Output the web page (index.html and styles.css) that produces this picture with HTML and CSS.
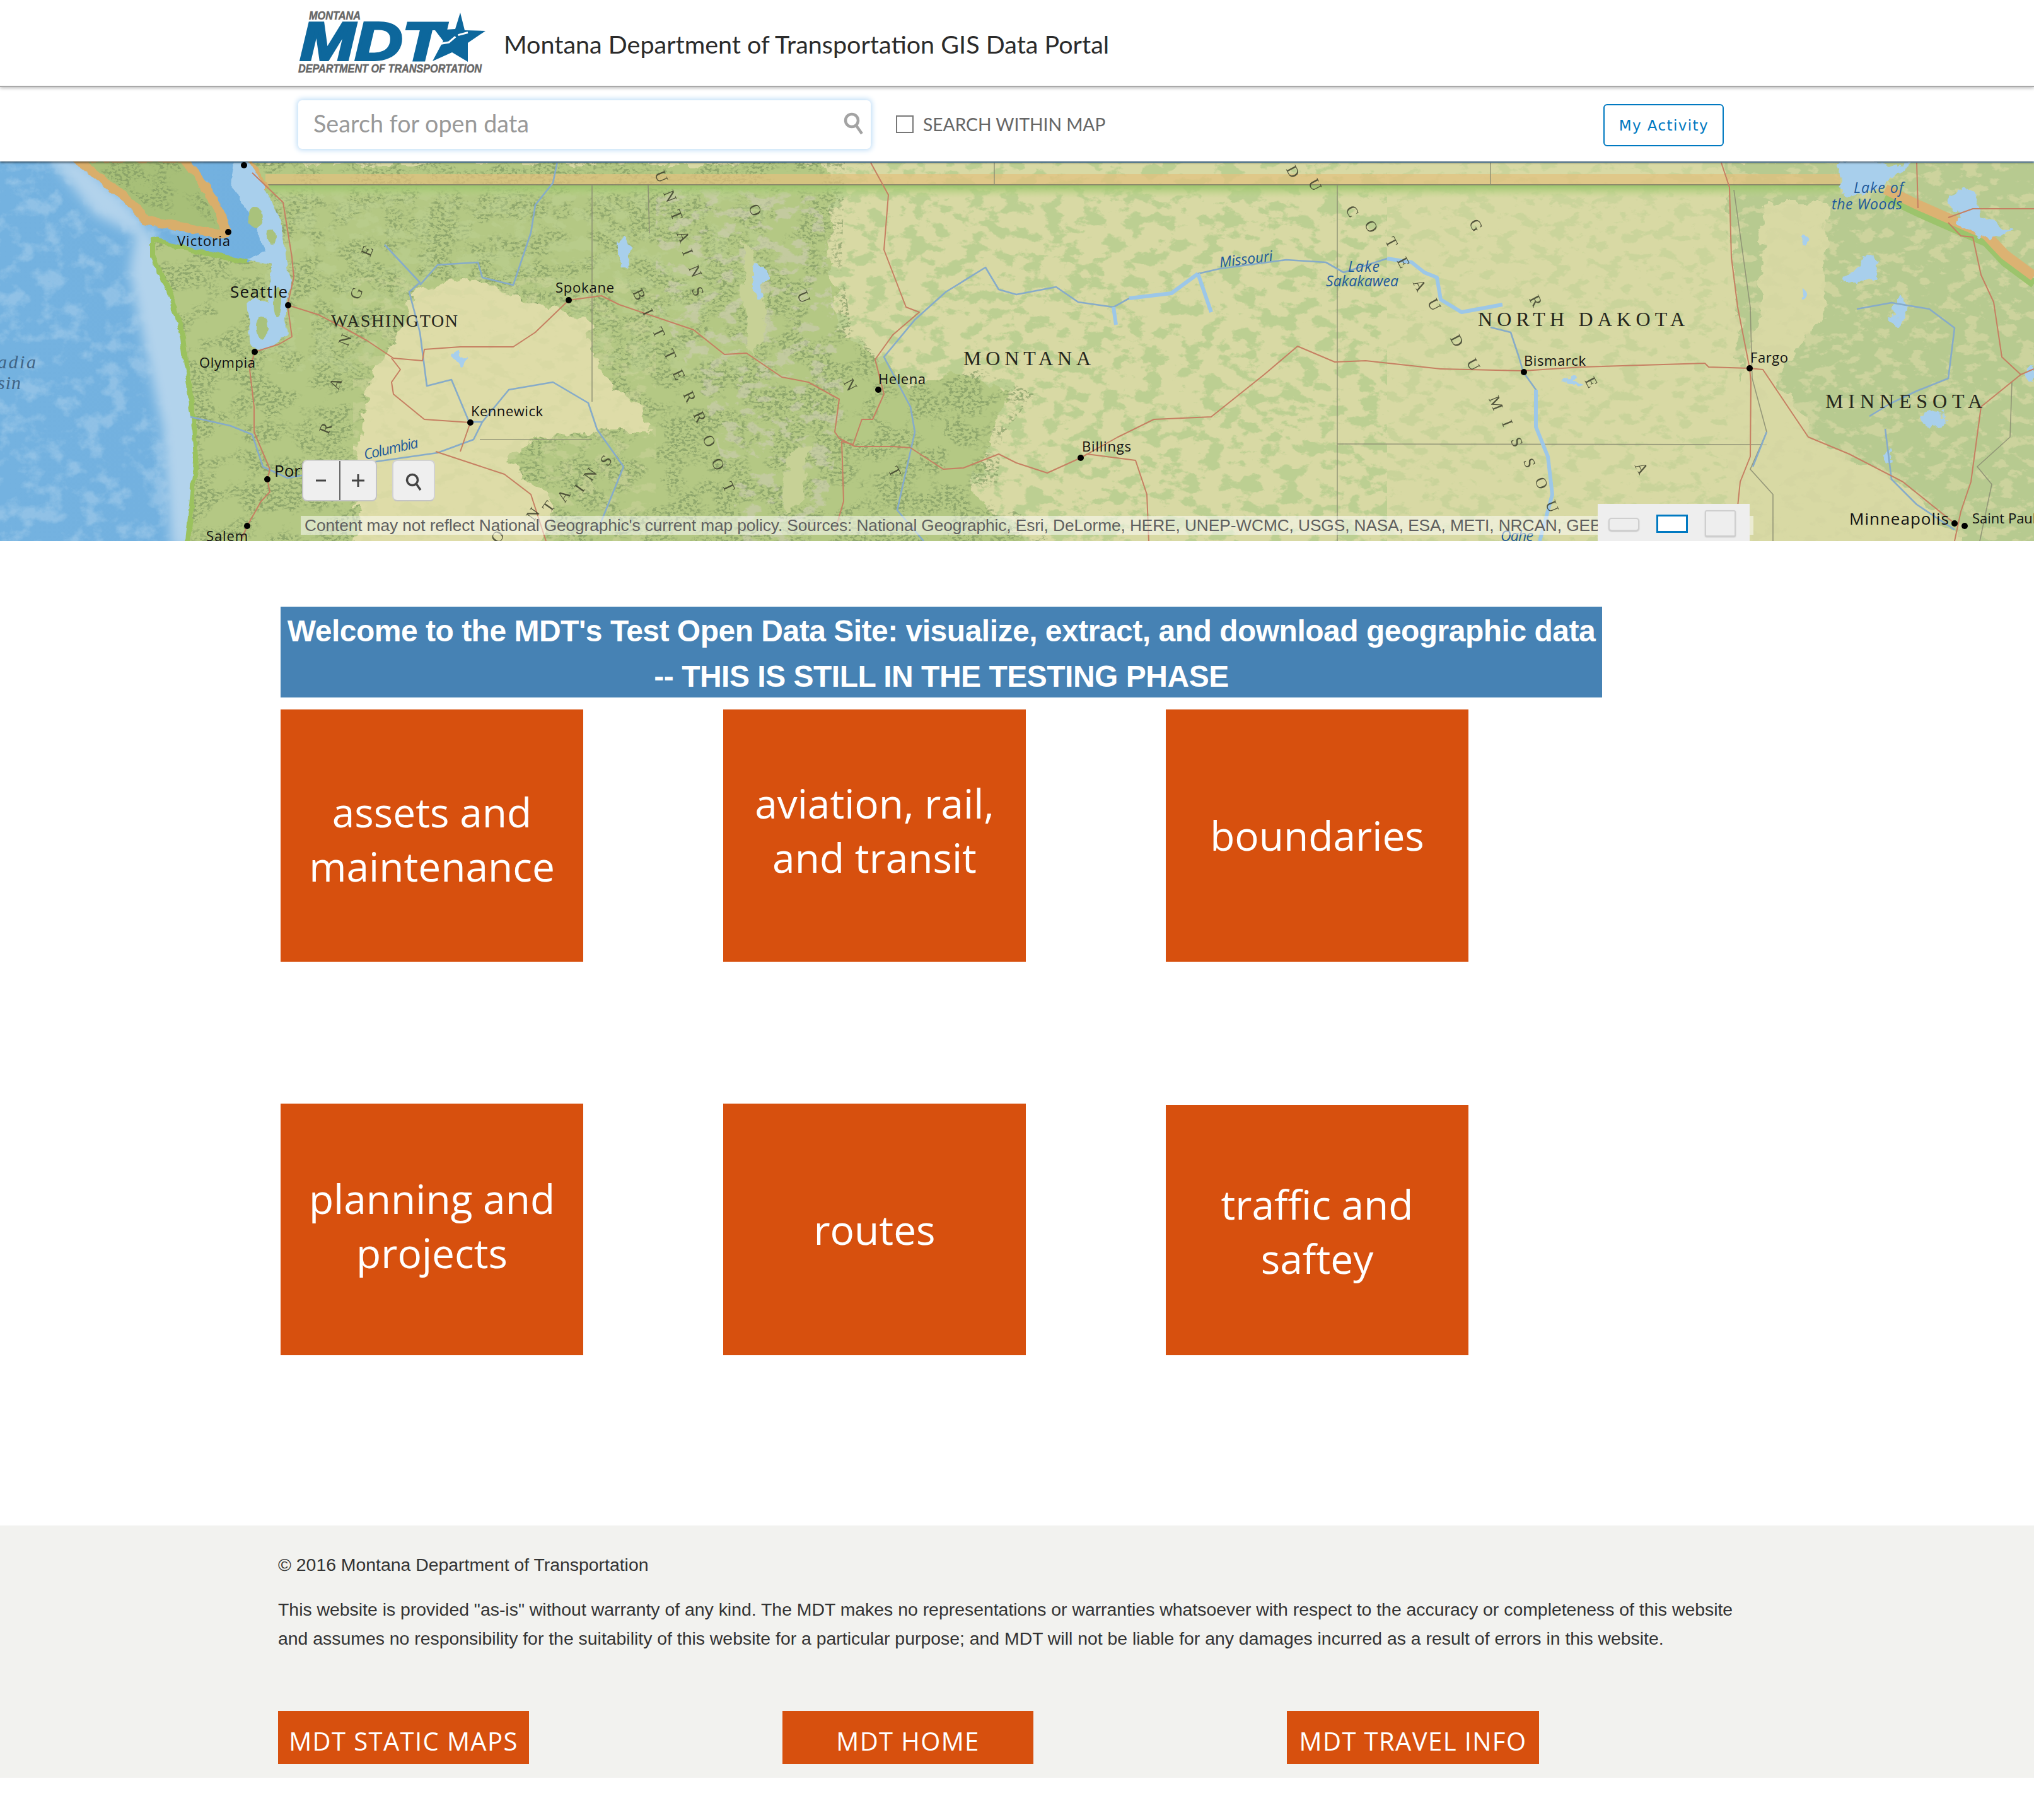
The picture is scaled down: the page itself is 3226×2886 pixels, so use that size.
FILE: index.html
```html
<!DOCTYPE html>
<html lang="en">
<head>
<meta charset="utf-8">
<title>Montana Department of Transportation GIS Data Portal</title>
<link rel="stylesheet" href="styles.css">
</head>
<body>
<header class="topbar">
  <svg class="logo" viewBox="470 14 302 104" width="302" height="104" role="img" aria-label="MDT logo">
    <text class="logo-sm" x="490" y="31" textLength="82" lengthAdjust="spacingAndGlyphs">MONTANA</text>
    <text class="logo-big" x="476" y="95" textLength="226" lengthAdjust="spacingAndGlyphs">MDT</text>
    <polygon class="logo-star" points="730,20 737,48 770,49 742,68 742,98 717,83 686,97 703,65 690,48 722,46"/>
    <path class="logo-swoosh" d="M690,71 L712,67 L725,56 L748,50"/>
    <text class="logo-sm" x="473" y="115" textLength="291" lengthAdjust="spacingAndGlyphs">DEPARTMENT OF TRANSPORTATION</text>
  </svg>
  <h1 class="site-title">Montana Department of Transportation GIS Data Portal</h1>
</header>

<div class="searchbar">
  <div class="search-box">
    <span class="search-placeholder">Search for open data</span>
    <svg class="search-icon" viewBox="0 0 32 36" width="32" height="36"><circle cx="13" cy="13" r="10"/><path d="M20 21 L29 34"/></svg>
  </div>
  <label class="within">
    <span class="within-box"></span>
    <span class="within-text">SEARCH WITHIN MAP</span>
  </label>
  <button class="activity">My Activity</button>
</div>

<section class="map">
  <svg class="map-art" viewBox="0 256 3226 602" width="3226" height="602" preserveAspectRatio="none">
    <defs>
      <linearGradient id="sea" x1="0" x2="1" y1="0" y2="0">
        <stop offset="0" stop-color="#74b2e0"/>
        <stop offset=".6" stop-color="#6dabdc"/>
        <stop offset="1" stop-color="#8fc0e6"/>
      </linearGradient>
      <linearGradient id="bandfade" x1="0" x2="0" y1="0" y2="1">
        <stop offset="0" stop-color="#9cc46c"/>
        <stop offset="1" stop-color="#b8d486" stop-opacity="0"/>
      </linearGradient>
      <filter id="ridge" x="0" y="0" width="1" height="1" color-interpolation-filters="sRGB">
        <feTurbulence type="fractalNoise" baseFrequency=".03 .035" numOctaves="5" seed="8"/>
        <feColorMatrix type="matrix" values="0 0 0 0 1  0 0 0 0 1  0 0 0 0 1  4 0 0 0 -1.9"/>
        <feComposite in2="SourceGraphic" operator="in"/>
      </filter>
      <filter id="blotch" x="0" y="0" width="1" height="1" color-interpolation-filters="sRGB">
        <feTurbulence type="fractalNoise" baseFrequency=".032 .05" numOctaves="6" seed="3" result="n"/>
        <feColorMatrix in="n" type="matrix" values="0 0 0 0 0  0 0 0 0 0  0 0 0 0 0  11 0 0 0 -5.6" result="a"/>
        <feComposite in="SourceGraphic" in2="a" operator="in"/>
      </filter>
      <filter id="blotch2" x="0" y="0" width="1" height="1" color-interpolation-filters="sRGB">
        <feTurbulence type="fractalNoise" baseFrequency=".035 .055" numOctaves="6" seed="21" result="n"/>
        <feColorMatrix in="n" type="matrix" values="0 0 0 0 0  0 0 0 0 0  0 0 0 0 0  11 0 0 0 -5.9" result="a"/>
        <feComposite in="SourceGraphic" in2="a" operator="in"/>
      </filter>
      <filter id="forest" x="0" y="0" width="1" height="1" color-interpolation-filters="sRGB">
        <feTurbulence type="fractalNoise" baseFrequency=".17 .25" numOctaves="3" seed="5" result="n"/>
        <feColorMatrix in="n" type="matrix" values="0 0 0 0 0  0 0 0 0 0  0 0 0 0 0  8 0 0 0 -3.9" result="fine"/>
        <feTurbulence type="fractalNoise" baseFrequency=".018 .026" numOctaves="5" seed="14" result="c"/>
        <feColorMatrix in="c" type="matrix" values="0 0 0 0 0  0 0 0 0 0  0 0 0 0 0  7 0 0 0 -2.9" result="coarse"/>
        <feComposite in="SourceGraphic" in2="fine" operator="in" result="f1"/>
        <feComposite in="f1" in2="coarse" operator="in"/>
      </filter>
      <filter id="rough" x="-5%" y="-5%" width="110%" height="110%" color-interpolation-filters="sRGB">
        <feTurbulence type="fractalNoise" baseFrequency=".04" numOctaves="4" seed="11" result="n"/>
        <feDisplacementMap in="SourceGraphic" in2="n" scale="30" xChannelSelector="R" yChannelSelector="G"/>
      </filter>
      <filter id="coastal" x="-5%" y="-5%" width="110%" height="110%" color-interpolation-filters="sRGB">
        <feTurbulence type="fractalNoise" baseFrequency=".05" numOctaves="3" seed="4" result="n"/>
        <feDisplacementMap in="SourceGraphic" in2="n" scale="10" xChannelSelector="R" yChannelSelector="G"/>
      </filter>
      <filter id="soft" x="-10%" y="-10%" width="120%" height="120%"><feGaussianBlur stdDeviation="9"/></filter>
      <clipPath id="landclip"><path d="M393,258 L3226,258 L3226,858 L298,858 L312,724 L309,677 L298,598 L291,535 L267,459 L242,408 L242,380 L300,395 L393,416 L421,400 L421,301 Z"/></clipPath>
    </defs>

    <rect class="sea" x="0" y="256" width="3226" height="602"/>
    <rect class="sea-relief" filter="url(#ridge)" x="0" y="256" width="330" height="602"/>
    <path class="shelf" filter="url(#soft)" d="M70,240 L130,258 L205,325 L250,385 L320,500 L330,870 L272,870 L258,680 L232,560 L205,430 L215,372 L150,340 Z"/>

    <!-- land -->
    <path class="land" d="M393,258 L3226,258 L3226,858 L298,858 L312,724 L309,677 L298,598 L291,535 L267,459 L242,408 L242,380 L300,395 L393,416 L421,400 L421,301 Z"/>
    <g clip-path="url(#landclip)">
      <rect class="prairie-green" filter="url(#blotch)" x="1300" y="256" width="900" height="602"/>
      <rect class="prairie-green faint" filter="url(#blotch2)" x="2200" y="256" width="540" height="602"/>
      <path class="east-green" filter="url(#rough)" d="M2740,250 L3240,250 L3240,870 L3130,870 L3010,760 L2880,700 L2820,600 L2890,500 L2900,320 L2800,320 L2790,500 L2760,600 Z"/>
      <rect class="prairie-tan" filter="url(#blotch2)" x="2740" y="256" width="486" height="602"/>
      <path class="west-green" filter="url(#rough)" d="M230,258 L1320,258 L1315,420 L1330,520 L1390,570 L1450,610 L1530,590 L1600,625 L1570,700 L1540,780 L1640,870 L230,870 Z"/>
      <path class="forest" filter="url(#forest)" d="M230,258 L1340,258 L1335,420 L1350,520 L1400,575 L1460,610 L1560,585 L1640,625 L1590,690 L1580,780 L1680,870 L230,870 Z"/>
      <rect class="prairie-green faint" filter="url(#blotch)" x="420" y="293" width="800" height="300"/>
      <path class="basin" filter="url(#rough)" d="M652,463 L744,440 L863,487 L933,507 L947,566 L968,614 L1017,645 L1031,685 L961,685 L842,697 L793,744 L701,803 L561,803 L582,606 L617,558 L652,487 Z"/>
      <path class="basin" filter="url(#rough)" d="M600,740 L800,730 L880,790 L860,870 L560,870 Z"/>
      <rect class="basin-mottle" filter="url(#blotch2)" x="560" y="440" width="480" height="420"/>
      <path class="rock" filter="url(#blotch2)" d="M1040,300 L1300,300 L1340,640 L1300,860 L1180,860 L1120,640 L1040,480 Z"/>
      <path class="foothill" filter="url(#rough)" d="M1180,380 L1205,420 L1215,500 L1195,560 L1175,470 Z"/>
      <path class="foothill" filter="url(#rough)" d="M1250,720 L1285,700 L1270,790 L1240,820 Z"/>
      <!-- border band -->
      <rect class="band-tan" x="421" y="276" width="2498" height="17"/>
      <rect class="band-dark" x="421" y="292" width="2498" height="2"/>
      <rect class="band-green" x="421" y="294" width="2498" height="20"/>
      <path class="border-east-green" d="M2990,312 L3040,336 L3090,358 L3150,384 L3180,416 L3226,450"/>
      <path class="border-east" d="M2990,300 L3040,324 L3090,346 L3150,372 L3180,404 L3226,438"/>
    </g>

    <!-- Vancouver Island -->
    <g filter="url(#coastal)">
      <path class="vi" d="M119,250 L288,250 L309,274 L340,320 L351,337 L358,368 L344,372 L300,362 L231,349 L203,317 Z"/>
      <path class="mainland-edge" d="M393,258 L410,285 L421,301"/>
      <path class="coast" d="M298,858 L312,724 L309,677 L298,598 L291,535 L267,459 L242,408 L242,380 L300,395 L393,416"/>
    </g>
    <path class="forest" filter="url(#forest)" d="M135,258 L280,258 L330,325 L342,356 L300,345 L240,335 L215,310 Z"/>

    <!-- water -->
    <g filter="url(#coastal)">
      <path class="water" d="M370,258 L396,258 L423,305 L446,350 L458,430 L462,445 L452,505 L456,530 L420,556 L398,548 L392,480 L405,470 L426,480 L430,420 L393,412 L421,398 L395,340 L365,290 Z"/>
      <ellipse class="isle" cx="405" cy="345" rx="11" ry="16"/>
      <ellipse class="isle" cx="430" cy="375" rx="8" ry="12"/>
      <ellipse class="isle" cx="440" cy="480" rx="6" ry="24"/>
      <ellipse class="isle" cx="415" cy="520" rx="10" ry="18"/>
    </g>
    <g filter="url(#rough)">
      <ellipse class="water" cx="1200" cy="445" rx="11" ry="28"/>
      <ellipse class="water" cx="990" cy="400" rx="9" ry="26"/>
      <ellipse class="water" cx="730" cy="565" rx="7" ry="12"/>
      <path class="water" d="M2917,258 L3031,258 L3000,285 L2960,310 L2920,305 Z"/>
      <path class="water" d="M3085,310 L3130,300 L3150,345 L3190,365 L3160,380 L3110,355 Z"/>
      <path class="water" d="M2920,440 L2945,425 L2960,404 L2985,410 L2970,440 L2965,448 L2925,448 Z"/>
      <ellipse class="water" cx="3066" cy="667" rx="14" ry="16"/>
      <path class="water" d="M3208,590 L3226,578 L3226,606 Z"/>
      <ellipse class="water" cx="2995" cy="725" rx="4" ry="10"/>
      <ellipse class="water" cx="3010" cy="490" rx="10" ry="20"/>
      <ellipse class="water" cx="2862" cy="462" rx="5" ry="8"/>
      <ellipse class="water" cx="2862" cy="385" rx="5" ry="8"/>
      <ellipse class="water" cx="2495" cy="603" rx="14" ry="4"/>
    </g>

    <!-- state and province lines -->
    <g class="line-state">
      <path d="M939,293 L939,637"/>
      <path d="M761,697 L939,697"/>
      <path d="M1028,293 L1030,370"/>
      <path d="M1577,258 L1577,293"/>
      <path d="M2364,258 L2364,293"/>
      <path d="M2121,293 L2121,858"/>
      <path d="M2121,704 L2802,705"/>
      <path d="M2750,301 L2776,487 L2779,600 L2802,685 L2776,744 L2812,784 L2812,858"/>
      <path d="M3191,606 L3188,693 L3136,740 L3159,768 L3140,858"/>
    </g>

    <!-- rivers -->
    <g class="river">
      <path d="M302,661 L365,675 L400,689 L417,740 L456,758 L596,732 L694,718 L751,697 L765,669 L744,669 L716,602 L677,612 L666,527 L649,463 L666,448 L610,388"/>
      <path d="M666,452 L694,420 L758,416 L765,440 L814,452 L842,369 L849,325 L877,290 L884,256"/>
      <path d="M765,669 L807,618 L877,606 L933,639 L947,681 L989,740 L947,843"/>
      <path d="M1465,858 L1423,809 L1451,685 L1444,645 L1402,566 L1451,507 L1500,463 L1563,424 L1584,459 L1612,467 L1675,455 L1710,479 L1766,487 L1791,473 L1858,465 L1900,434 L1935,426 L2040,412 L2103,416 L2131,432 L2200,410"/>
      <path d="M2364,519 L2396,527 L2409,566 L2416,590 L2436,618 L2436,677 L2455,724 L2462,784 L2442,858"/>
      <path d="M2965,660 L2998,640 L3040,620 L3090,600 L3100,520 L3060,490 L3000,480 L2945,490"/>
      <path d="M2990,680 L3000,760 L3040,800 L3100,840"/>
      <path d="M2802,685 L2780,740"/>
    </g>
    <g class="river-wide">
      <path d="M1791,473 L1858,465 L1900,434"/>
      <path d="M1900,434 L1921,495"/>
      <path d="M1766,487 L1770,515"/>
      <path d="M2200,410 L2239,416 L2259,432 L2279,440 L2285,475 L2318,495 L2383,483"/>
      <path d="M2436,618 L2436,677 L2455,724 L2462,784 L2442,858"/>
    </g>

    <!-- roads -->
    <g class="road">
      <path d="M400,274 L449,321 L463,408 L466,440 L456,483 L463,534 L442,546 L404,558 L396,586 L403,645 L403,685 L428,744 L424,760 L428,780 L414,795 L392,834 L382,858"/>
      <path d="M457,484 L505,499 L544,519 L582,540 L624,568 L670,572 L673,554 L730,550 L814,550 L849,527 L902,476 L954,469 L982,483 L1100,523 L1149,562 L1184,560 L1240,598 L1282,606 L1331,633 L1324,685 L1331,695 L1356,708 L1416,708 L1444,710 L1496,744 L1528,742 L1584,720 L1612,734 L1661,750 L1714,726 L1724,720 L1801,730 L1819,784 L1822,858"/>
      <path d="M1714,726 L1773,693 L1830,665 L1921,661 L2005,594 L2058,549 L2117,574 L2166,572 L2285,585 L2416,588 L2508,582 L2704,576 L2710,582 L2775,584 L2796,586 L2841,653 L2868,693 L2933,720 L3018,764 L3100,830"/>
      <path d="M2730,258 L2743,297 L2746,408 L2756,487 L2775,584 L2777,606 L2776,724 L2760,764 L2756,803"/>
      <path d="M3090,353 L3110,374 L3129,376 L3142,436 L3162,479 L3175,566 L3205,594 L3142,645 L3126,764 L3110,811 L3100,858"/>
      <path d="M3090,345 L3129,331 L3226,331"/>
      <path d="M3205,594 L3226,585"/>
      <path d="M3040,258 L3042,330"/>
      <path d="M1381,258 L1409,309 L1402,396 L1437,487 L1458,495 L1416,531 L1388,570 L1402,625 L1384,665 L1367,665 L1353,705 L1335,700 L1338,795 L1324,843"/>
      <path d="M691,716 L800,752 L842,784 L866,858"/>
      <path d="M621,568 L635,586 L621,606 L624,625 L673,665 L746,670 L730,716"/>
    </g>

    <!-- relief lettering -->
    <g class="relief">
      <text transform="translate(516 679) rotate(-68)">R</text><text transform="translate(532 608) rotate(-68)">A</text><text transform="translate(547 539) rotate(-68)">N</text><text transform="translate(565 465) rotate(-68)">G</text><text transform="translate(582 398) rotate(-68)">E</text>
      <text transform="translate(1049 280) rotate(68)">U</text><text transform="translate(1063 311) rotate(68)">N</text><text transform="translate(1073 341) rotate(68)">T</text><text transform="translate(1084 375) rotate(68)">A</text><text transform="translate(1091 400) rotate(68)">I</text><text transform="translate(1103 430) rotate(68)">N</text><text transform="translate(1107 462) rotate(68)">S</text>
      <text transform="translate(1014 467) rotate(65)">B</text><text transform="translate(1028 495) rotate(65)">I</text><text transform="translate(1045 527) rotate(65)">T</text><text transform="translate(1063 562) rotate(65)">T</text><text transform="translate(1077 594) rotate(65)">E</text><text transform="translate(1094 629) rotate(65)">R</text><text transform="translate(1110 661) rotate(65)">R</text><text transform="translate(1125 699) rotate(65)">O</text><text transform="translate(1139 736) rotate(65)">O</text><text transform="translate(1156 772) rotate(65)">T</text>
      <text transform="translate(961 730) rotate(-55)">S</text><text transform="translate(936 752) rotate(-55)">N</text><text transform="translate(919 774) rotate(-55)">I</text><text transform="translate(894 786) rotate(-55)">A</text><text transform="translate(870 803) rotate(-55)">T</text><text transform="translate(845 815) rotate(-55)">N</text><text transform="translate(789 851) rotate(-55)">O</text>
      <text transform="translate(1198 333) rotate(68)">O</text><text transform="translate(1275 471) rotate(68)">U</text><text transform="translate(1349 610) rotate(62)">N</text><text transform="translate(1419 748) rotate(62)">T</text>
      <text transform="translate(2051 272) rotate(62)">D</text><text transform="translate(2086 293) rotate(62)">U</text><text transform="translate(2145 335) rotate(62)">C</text><text transform="translate(2175 359) rotate(62)">O</text><text transform="translate(2207 384) rotate(62)">T</text><text transform="translate(2226 416) rotate(62)">E</text><text transform="translate(2252 452) rotate(62)">A</text><text transform="translate(2275 483) rotate(62)">U</text><text transform="translate(2311 540) rotate(62)">D</text><text transform="translate(2337 578) rotate(62)">U</text><text transform="translate(2373 639) rotate(68)">M</text><text transform="translate(2391 671) rotate(68)">I</text><text transform="translate(2406 701) rotate(68)">S</text><text transform="translate(2426 734) rotate(68)">S</text><text transform="translate(2445 766) rotate(68)">O</text><text transform="translate(2462 803) rotate(68)">U</text>
      <text transform="translate(2341 357) rotate(62)">G</text><text transform="translate(2436 477) rotate(62)">R</text><text transform="translate(2524 606) rotate(62)">E</text><text transform="translate(2604 742) rotate(62)">A</text>
    </g>

    <!-- states -->
    <g class="state">
      <text class="state-wa" x="525" y="518" textLength="201">WASHINGTON</text>
      <text x="1528" y="579" textLength="202">MONTANA</text>
      <text x="2344" y="517" textLength="328">NORTH DAKOTA</text>
      <text x="2895" y="647" textLength="249">MINNESOTA</text>
    </g>

    <!-- water labels -->
    <g class="hydro">
      <text class="ocean" x="-4" y="584" textLength="64">adia</text>
      <text class="ocean" x="-4" y="617" textLength="40">sin</text>
      <text transform="translate(579 729) rotate(-13)" textLength="88">Columbia</text>
      <text transform="translate(1935 424) rotate(-7)" textLength="85">Missouri</text>
      <text x="2138" y="431" textLength="50">Lake</text>
      <text x="2103" y="454" textLength="115">Sakakawea</text>
      <text x="2940" y="306" textLength="79">Lake of</text>
      <text x="2905" y="332" textLength="112">the Woods</text>
      <text x="2380" y="858" textLength="52">Oahe</text>
    </g>

    <!-- cities -->
    <g class="dots">
      <circle cx="387" cy="262" r="5"/><circle cx="362" cy="368" r="5"/><circle cx="457" cy="484" r="5"/><circle cx="902" cy="476" r="5"/><circle cx="404" cy="558" r="5"/><circle cx="746" cy="670" r="5"/><circle cx="424" cy="760" r="5"/><circle cx="392" cy="834" r="5"/>
      <circle cx="1393" cy="618" r="5"/><circle cx="1714" cy="726" r="5"/><circle cx="2417" cy="590" r="5"/><circle cx="2775" cy="584" r="5"/><circle cx="3100" cy="830" r="5"/><circle cx="3116" cy="834" r="5"/>
    </g>
    <g class="city">
      <text x="281" y="390" textLength="84">Victoria</text>
      <text class="city-lg" x="365" y="472" textLength="91">Seattle</text>
      <text x="881" y="464" textLength="93">Spokane</text>
      <text x="316" y="583" textLength="89">Olympia</text>
      <text x="747" y="660" textLength="114">Kennewick</text>
      <text class="city-lg" x="435" y="756">Portland</text>
      <text x="327" y="858" textLength="66">Salem</text>
      <text x="1393" y="609" textLength="75">Helena</text>
      <text x="1716" y="716" textLength="78">Billings</text>
      <text x="2417" y="580" textLength="98">Bismarck</text>
      <text x="2776" y="575" textLength="60">Fargo</text>
      <text class="city-lg" x="2933" y="832" textLength="158">Minneapolis</text>
      <text x="3128" y="830">Saint Paul</text>
    </g>
  </svg>

  <div class="zoom-group">
    <button class="zoom-btn zoom-out"><svg viewBox="0 0 20 20" width="20" height="20"><path d="M2 10 H18"/></svg></button>
    <button class="zoom-btn zoom-in"><svg viewBox="0 0 22 22" width="22" height="22"><path d="M1 11 H21 M11 1 V21"/></svg></button>
  </div>
  <button class="map-find"><svg viewBox="0 0 26 30" width="26" height="30"><circle cx="11" cy="11" r="8.5"/><path d="M17 17 L24 27"/></svg></button>
  <div class="attribution">Content may not reflect National Geographic's current map policy. Sources: National Geographic, Esri, DeLorme, HERE, UNEP-WCMC, USGS, NASA, ESA, METI, NRCAN, GEBCO</div>
  <div class="basemap">
    <span class="bm bm-short"></span>
    <span class="bm bm-active"></span>
    <span class="bm bm-tall"></span>
  </div>
</section>

<main class="content">
  <h2 class="welcome">Welcome to the MDT's Test Open Data Site: visualize, extract, and download geographic data<br>-- THIS IS STILL IN THE TESTING PHASE</h2>
  <div class="tiles">
    <a class="tile tile-low">assets and<br>maintenance</a>
    <a class="tile tile-high">aviation, rail,<br>and transit</a>
    <a class="tile">boundaries</a>
    <a class="tile tile-up">planning and<br>projects</a>
    <a class="tile">routes</a>
    <a class="tile tile-last">traffic and<br>saftey</a>
  </div>
</main>

<footer class="footer">
  <p class="footer-text">© 2016 Montana Department of Transportation</p>
  <p class="footer-text">This website is provided "as-is" without warranty of any kind. The MDT makes no representations or warranties whatsoever with respect to the accuracy or completeness of this website<br>and assumes no responsibility for the suitability of this website for a particular purpose; and MDT will not be liable for any damages incurred as a result of errors in this website.</p>
  <div class="footer-links">
    <a class="footer-btn">MDT STATIC MAPS</a>
    <a class="footer-btn">MDT HOME</a>
    <a class="footer-btn footer-btn-wide">MDT TRAVEL INFO</a>
  </div>
</footer>
</body>
</html>
```
FILE: styles.css
```css
* { box-sizing: border-box; }
html, body { margin: 0; padding: 0; background: #fff; }
body { width: 3226px; height: 2886px; overflow: hidden; font-family: "Liberation Sans", Arial, sans-serif; color: #333; }

/* header */
.topbar { height: 138px; display: flex; align-items: center; padding-left: 470px; border-bottom: 2px solid #a9a9a9; box-shadow: 0 2px 5px rgba(0,0,0,.25); position: relative; z-index: 2; background: #fff; }
.logo { display: block; flex: none; margin-bottom: 5px; }
.logo-sm { font: italic 700 19px "Liberation Sans", sans-serif; fill: #666; stroke: #666; stroke-width: .5px; }
.logo-big { font: italic 700 86px "Liberation Sans", sans-serif; fill: #0d679c; stroke: #0d679c; stroke-width: 4px; }
.logo-star { fill: #0d679c; }
.logo-swoosh { fill: none; stroke: #fff; stroke-width: 3px; stroke-dasharray: 36 5 16; }
.site-title { margin: 4px 0 0 27px; font: 400 39.5px/1 Lato, sans-serif; color: #2b2b2b; white-space: nowrap; }

/* search bar */
.searchbar { height: 118px; display: flex; align-items: center; padding-left: 473px; background: #fff; position: relative; z-index: 1; box-shadow: 0 2px 3px rgba(0,0,0,.55); }
.search-box { width: 908px; height: 77px; display: flex; align-items: center; justify-content: space-between; padding: 0 11px 0 24px; border-radius: 6px; background: #fff; box-shadow: 0 0 9px 2px #bcdcf6; }
.search-placeholder { margin-bottom: 2px; font: 400 37.7px/1 Lato, sans-serif; color: #999; }
.search-icon { margin-bottom: 3px; }
.search-icon circle, .search-icon path { fill: none; stroke: #a3a3a3; stroke-width: 4.5px; }
.within { display: flex; align-items: center; margin-left: 40px; }
.within-box { width: 28px; height: 28px; border: 2px solid #777; background: #fff; }
.within-text { margin-left: 15px; font: 400 28.2px/1 Lato, sans-serif; color: #666; white-space: nowrap; }
.activity { margin: 2px 0 0 790px; width: 191px; height: 67px; padding: 2px 0 0; border: 2.5px solid #0079c1; border-radius: 6px; background: #fff; color: #0079c1; font: 400 23px/1 "DejaVu Sans", sans-serif; letter-spacing: 1.4px; }

/* map */
.map { position: relative; height: 602px; overflow: hidden; background: #8fc0e6; }
.map-art { display: block; }
.sea { fill: url(#sea); }
.sea-relief { fill: #fff; opacity: .2; }
.shelf { fill: #b2d3ec; }
.land { fill: #d8d9a4; }
.prairie-green { fill: #bccf92; }
.prairie-green.faint { opacity: .5; }
.prairie-tan { fill: #d4d6a2; opacity: .75; }
.east-green { fill: #b7ca90; }
.west-green { fill: #b4c884; }
.forest { fill: #7a9460; opacity: .62; }
.basin { fill: #dedca8; }
.basin-mottle { fill: #d2d6a0; opacity: .4; }
.rock { fill: #cfcdb6; opacity: .55; }
.foothill { fill: #c7d196; }
.band-tan { fill: #e2c07e; opacity: .72; }
.band-dark { fill: #7f7f66; opacity: .85; }
.band-green { fill: url(#bandfade); }
.border-east-green { fill: none; stroke: #9cc46c; stroke-width: 14px; }
.border-east { fill: none; stroke: #dcb272; stroke-width: 16px; }
.vi { fill: #a7bf78; stroke: #d9ae6b; stroke-width: 14px; stroke-linejoin: round; }
.mainland-edge { fill: none; stroke: #d9ae6b; stroke-width: 14px; }
.coast { fill: none; stroke: #9bc25e; stroke-width: 8px; stroke-linejoin: round; }
.water { fill: #a8cfec; }
.isle { fill: #a9c27c; }
.line-state path { fill: none; stroke: #8a8c72; stroke-width: 1.6px; opacity: .85; }
.river path { fill: none; stroke: #86abc9; stroke-width: 2.6px; stroke-linejoin: round; }
.river-wide path { fill: none; stroke: #9cc7e8; stroke-width: 6px; stroke-linejoin: round; }
.road path { fill: none; stroke: #c67f62; stroke-width: 2px; stroke-linejoin: round; }
.relief text { font: 400 25px "Liberation Serif", serif; fill: #3c3f2c; text-anchor: middle; dominant-baseline: central; opacity: .85; }
.state text { font: 400 32px "Liberation Serif", serif; fill: #25261c; }
.state .state-wa { font-size: 28px; }
.hydro text { font: italic 400 23px "Open Sans", sans-serif; fill: #1f5a9a; }
.hydro .ocean { font: italic 400 30px "Liberation Serif", serif; fill: #3f6486; letter-spacing: 3px; }
.dots circle { fill: #000; }
.city text { font: 400 22px "Open Sans", sans-serif; fill: #111; }
.city .city-lg { font-size: 26px; }

.zoom-group { position: absolute; left: 479px; top: 473px; width: 119px; height: 66px; display: flex; border-radius: 8px; background: #efefef; border: 2px solid #c4c4c4; border-top-color: #d2d2d2; overflow: hidden; }
.zoom-btn { flex: 1; padding: 0; border: 0; background: transparent; display: flex; align-items: center; justify-content: center; }
.zoom-out { border-right: 2px solid #666; }
.zoom-btn path { fill: none; stroke: #444; stroke-width: 3px; }
.map-find { position: absolute; left: 622px; top: 473px; width: 68px; height: 66px; padding: 6px 0 0; border: 2px solid #d2d2d2; border-bottom-color: #c4c4c4; border-radius: 8px; background: #efefef; display: flex; align-items: center; justify-content: center; }
.map-find circle, .map-find path { fill: none; stroke: #444; stroke-width: 3.5px; }
.attribution { position: absolute; left: 477px; top: 562px; width: 2304px; height: 30px; padding-left: 6px; background: rgba(255,255,255,.5); font: 400 26.3px/30px "Liberation Sans", sans-serif; letter-spacing: -.1px; color: #5f5f5f; white-space: nowrap; overflow: hidden; }
.basemap { position: absolute; left: 2534px; top: 543px; width: 241px; height: 59px; background: #eee; }
.bm { position: absolute; display: block; border-radius: 3px; background: #eee; border: 2px solid #cfcfcf; box-shadow: 0 1px 2px rgba(0,0,0,.2); }
.bm-short { left: 17px; top: 22px; width: 49px; height: 21px; border-radius: 5px; }
.bm-active { left: 93px; top: 17px; width: 50px; height: 29px; background: #fff; border: 3px solid #0079c1; border-radius: 0; box-shadow: none; }
.bm-tall { left: 170px; top: 10px; width: 49px; height: 42px; }

/* content */
.content { padding: 104px 0 0 445px; }
.welcome { width: 2096px; height: 144px; margin: 0; padding-top: 3px; background: #4682b4; color: #fff; text-align: center; font: 700 48px/72px "Liberation Sans", sans-serif; letter-spacing: -.5px; white-space: nowrap; }
.tiles { display: grid; grid-template-columns: repeat(3, 480px); grid-template-rows: 400px 399px; column-gap: 222px; row-gap: 225px; margin-top: 19px; }
.tile { display: flex; align-items: center; justify-content: center; text-align: center; background: #d7500e; color: #fff; font: 400 64px/86px "Open Sans", sans-serif; }
.tile-low { padding-top: 12px; }
.tile-high { padding-bottom: 16px; }
.tile-up { padding-bottom: 12px; }
.tile-last { margin-top: 2px; padding-top: 4px; }

/* footer */
.footer { margin-top: 270px; height: 400px; padding: 39px 0 0 441px; background: #f2f2ef; }
.footer-text { margin: 0 0 25px; font: 400 28.4px/46px "Liberation Sans", sans-serif; color: #333; white-space: nowrap; }
.footer-links { display: flex; gap: 402px; margin-top: 92px; }
.footer-btn { width: 398px; height: 84px; padding-top: 12px; display: flex; align-items: center; justify-content: center; background: #d7500e; color: #fff; font: 400 40px/1 "Open Sans", sans-serif; letter-spacing: 1.4px; white-space: nowrap; }
.footer-btn-wide { width: 400px; }
```
